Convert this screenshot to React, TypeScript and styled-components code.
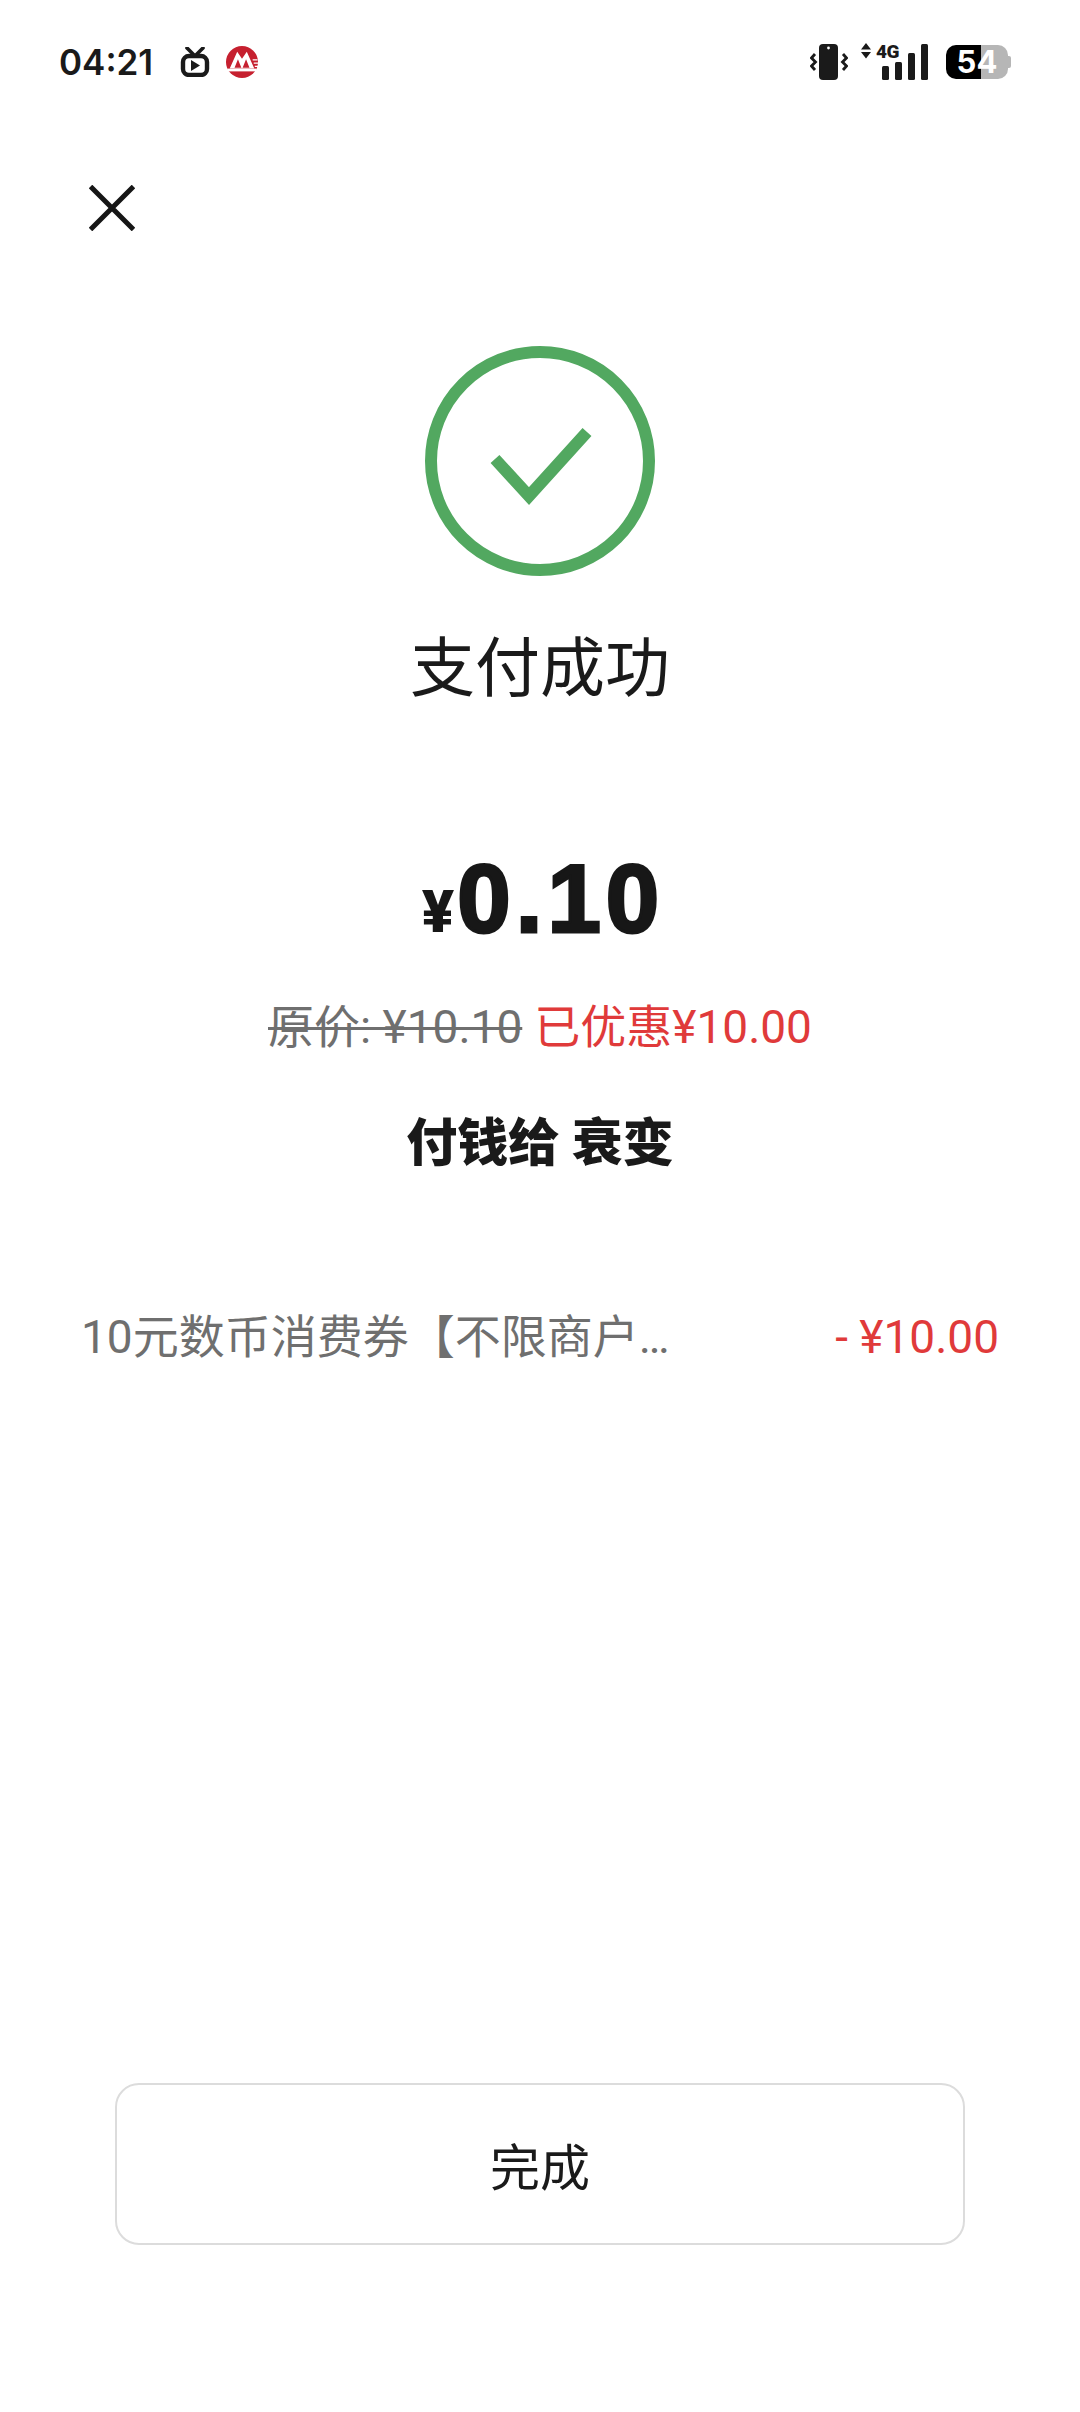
import React from 'react'
import styled, { createGlobalStyle } from 'styled-components'

const GlobalStyle = createGlobalStyle`
    html, body {
        margin: 0;
        padding: 0;
        background: #ffffff;
    }
    * {
        box-sizing: border-box;
    }
`

const FONT = `Roboto, "Noto Sans CJK SC", sans-serif`

const Page = styled.div`
    width: 1080px;
    height: 2412px;
    display: flex;
    flex-direction: column;
    background: #ffffff;
    font-family: ${FONT};
`

const StatusBar = styled.div`
    height: 124px;
    padding: 44px 69px 0 59px;
    display: flex;
    align-items: flex-start;
    justify-content: space-between;
`

const StatusGroup = styled.div`
    display: flex;
    align-items: center;
`

const Time = styled.span`
    font-family: Inter, sans-serif;
    font-weight: 600;
    font-size: 35px;
    line-height: 36px;
    color: #1a1a1a;
    width: 121px;
`

const Battery = styled.div`
    width: 62px;
    height: 34px;
    margin-left: 17px;
    border-radius: 10px;
    background: linear-gradient(90deg, #000000 56%, #b6b6b6 56%);
    display: flex;
    align-items: center;
    justify-content: center;
    color: #ffffff;
    font-family: Inter, sans-serif;
    font-weight: 700;
    font-size: 31px;
    line-height: 34px;
`

const BatteryNub = styled.div`
    width: 3px;
    height: 12px;
    background: #b6b6b6;
    border-radius: 0 2px 2px 0;
`

const CloseButton = styled.div`
    height: 46px;
    margin-left: 89px;
    display: flex;
    margin-top: 61px;
`

const Hero = styled.div`
    display: flex;
    flex-direction: column;
    align-items: center;
    margin-top: 115px;
`

const Title = styled.div`
    margin-top: 53px;
    font-size: 65px;
    line-height: 80px;
    color: #1a1a1a;
`

const Amount = styled.div`
    margin: 135px 0 0 6px;
    height: 110px;
    display: flex;
    align-items: baseline;
    color: #171717;
    font-family: "Liberation Sans", sans-serif;
    font-weight: 700;
`

const AmountUnit = styled.span`
    font-family: Roboto, sans-serif;
    font-weight: 900;
    font-size: 60px;
    margin-right: 3px;
`

const AmountValue = styled.span`
    font-size: 96px;
    line-height: 110px;
    letter-spacing: 5px;
    -webkit-text-stroke: 3px #171717;
`

const PriceLine = styled.div`
    margin-top: 43px;
    font-size: 46px;
    line-height: 60px;
    display: flex;
    gap: 12px;
`

const OldPrice = styled.span`
    color: #6f6f6f;
    text-decoration: line-through;
    text-decoration-thickness: 3px;
`

const Saved = styled.span`
    color: #e03a3a;
`

const Payee = styled.div`
    margin-top: 57px;
    font-size: 51px;
    line-height: 60px;
    font-weight: 900;
    color: #1a1a1a;
`

const DiscountRow = styled.div`
    margin-top: 133px;
    padding: 0 81px 0 81px;
    display: flex;
    justify-content: space-between;
    align-items: center;
    font-size: 46px;
    line-height: 60px;
`

const DiscountName = styled.span`
    color: #6f6f6f;
    white-space: nowrap;
`

const DoneButton = styled.button`
    width: 850px;
    height: 162px;
    margin: auto 0 167px 115px;
    border: 2px solid #dcdcdc;
    border-radius: 24px;
    background: #ffffff;
    font-family: ${FONT};
    font-size: 50px;
    color: #1a1a1a;
    padding: 0;
`

const App = () => {
    return (
        <Page>
            <GlobalStyle />
            <StatusBar>
                <StatusGroup>
                    <Time>04:21</Time>
                    <svg width="30" height="30" viewBox="0 0 30 30">
                        <path d="M7 1l7 7M23 1l-7 7" stroke="#1a1a1a" strokeWidth="3.6" strokeLinecap="round" />
                        <rect x="3" y="9" width="24" height="19" rx="6" fill="none" stroke="#1a1a1a" strokeWidth="4.4" />
                        <path d="M11 13l9 5.5-9 5.5z" fill="#1a1a1a" />
                    </svg>
                    <svg width="32" height="32" viewBox="0 0 30 30" style={{ marginLeft: 16 }}>
                        <circle cx="15" cy="15" r="15" fill="#c6202f" />
                        <path d="M3.500 21L10.500 5.500 15 12l4.500-6.500L26.500 21z" fill="#ffffff" />
                        <path d="M8 20.500l3.200-8 3.200 8zM15.600 20.500l3.200-8 3.200 8z" fill="#c6202f" />
                        <path d="M1.500 22.500h27" stroke="#ffffff" strokeWidth="2.6" />
                        <path d="M25 13h4.500M26 16h4M27 19h3" stroke="#ffffff" strokeWidth="1.2" />
                    </svg>
                </StatusGroup>
                <StatusGroup>
                    <svg width="38" height="36" viewBox="0 0 38 36">
                        <rect x="9" y="0" width="19" height="36" rx="4" fill="#1a1a1a" />
                        <circle cx="18.500" cy="4" r="1.4" fill="#ffffff" />
                        <path d="M5 10L1.500 14 5.500 18 1.500 22 5 26M33 10l3.500 4-4 4 4 4-3.500 4" fill="none" stroke="#1a1a1a" strokeWidth="2.8" />
                    </svg>
                    <svg width="68" height="42" viewBox="0 -6 68 42" style={{ marginLeft: 13, marginTop: -6 }}>
                        <path d="M5 -1l5 6.500H0zM5 14.500l5-6.500H0z" fill="#1a1a1a" />
                        <text x="15" y="14" fontFamily="Roboto, sans-serif" fontWeight="900" fontSize="19" letterSpacing="-0.5" fill="#1a1a1a">4G</text>
                        <rect x="21" y="22" width="7" height="14" rx="1.500" fill="#1a1a1a" />
                        <rect x="34" y="18" width="7" height="18" rx="1.500" fill="#1a1a1a" />
                        <rect x="47" y="9" width="7" height="27" rx="1.500" fill="#1a1a1a" />
                        <rect x="60" y="0" width="7" height="36" rx="1.500" fill="#1a1a1a" />
                    </svg>
                    <Battery>54</Battery>
                    <BatteryNub />
                </StatusGroup>
            </StatusBar>

            <CloseButton>
                <svg width="46" height="46" viewBox="0 0 46 46">
                    <path d="M1.500 1.500l43 43M44.500 1.500l-43 43" stroke="#161616" strokeWidth="5" />
                </svg>
            </CloseButton>

            <Hero>
                <svg width="230" height="230" viewBox="0 0 230 230">
                    <circle cx="115" cy="115" r="109" fill="none" stroke="#52a860" strokeWidth="12" />
                    <path d="M70 113l34 37 58-64" fill="none" stroke="#52a860" strokeWidth="12" />
                </svg>
                <Title>支付成功</Title>
                <Amount>
                    <AmountUnit>¥</AmountUnit>
                    <AmountValue>0.10</AmountValue>
                </Amount>
                <PriceLine>
                    <OldPrice>原价: ¥10.10</OldPrice>
                    <Saved>已优惠¥10.00</Saved>
                </PriceLine>
                <Payee>付钱给 衰变</Payee>
            </Hero>

            <DiscountRow>
                <DiscountName>10元数币消费券【不限商户…</DiscountName>
                <Saved>- ¥10.00</Saved>
            </DiscountRow>

            <DoneButton>完成</DoneButton>
        </Page>
    )
}

export default App
